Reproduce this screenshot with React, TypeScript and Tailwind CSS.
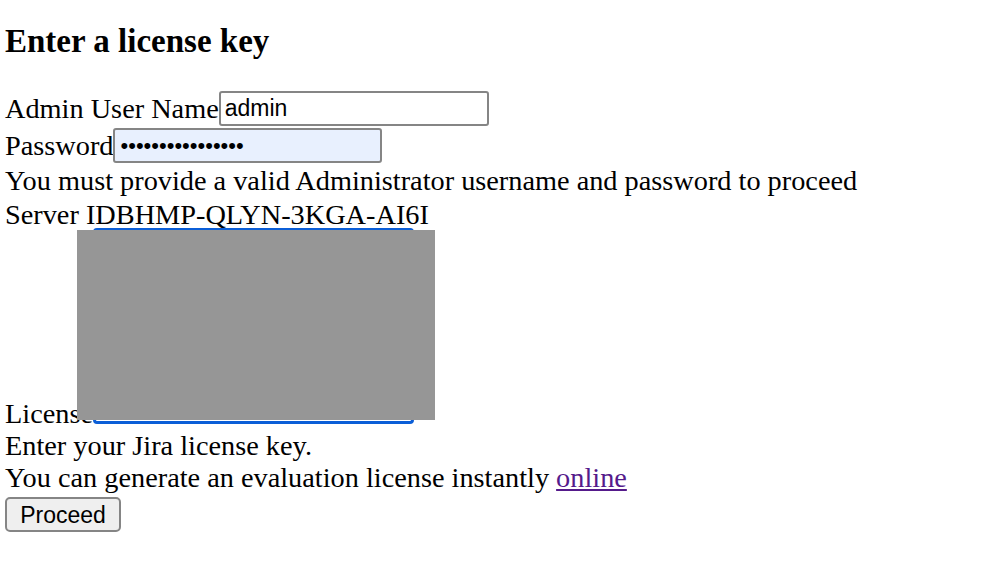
export default function App() {
  return (
    <div className="relative h-[563px] w-[999px] overflow-hidden bg-white pl-[5px] pt-[22px] text-[28.3px] leading-[32px] text-black [font-family:'Liberation_Serif','Times_New_Roman',serif]">
      <h3 className="text-[33px] font-bold leading-[38px]">Enter a license key</h3>

      <div className="mt-[31px] flex h-[35px] items-center">
        <span>Admin User Name</span>
        <input
          type="text"
          defaultValue="admin"
          className="h-[35px] w-[270px] rounded-[3px] border-2 border-[#858585] bg-white px-[4px] text-[23px] text-black outline-none [font-family:'Liberation_Sans',Arial,sans-serif]"
        />
      </div>

      <div className="mt-[2px] flex h-[35px] items-center">
        <span>Password</span>
        <input
          type="password"
          defaultValue="abcdefghijklmnop"
          className="h-[35px] w-[269px] rounded-[3px] border-2 border-[#858585] bg-[#e8f0fe] px-[5px] text-[22px] text-black outline-none [font-family:'Liberation_Sans',Arial,sans-serif]"
        />
      </div>

      <div className="mt-[2px]">You must provide a valid Administrator username and password to proceed</div>
      <div className="mt-[2px] h-[29px]">Server IDBHMP-QLYN-3KGA-AI6I</div>

      <div className="flex items-end">
        <span className="leading-[20px]">License</span>
        <div className="relative">
          <textarea className="block h-[196px] w-[321px] resize-none rounded-[4px] border-[3px] border-[#0b5ed7] bg-white outline-none" />
          <div className="absolute left-[-16px] top-[2px] h-[190px] w-[358px] bg-[#969696]" />
        </div>
      </div>

      <div className="mt-[6px]">Enter your Jira license key.</div>
      <div>
        You can generate an evaluation license instantly{" "}
        <a href="#" className="text-[#551a8b] underline">
          online
        </a>
      </div>

      <button className="mt-[3px] h-[35px] w-[116px] rounded-[5px] border-2 border-[#858585] bg-[#efefef] text-[23px] text-black [font-family:'Liberation_Sans',Arial,sans-serif]">
        Proceed
      </button>
    </div>
  );
}
